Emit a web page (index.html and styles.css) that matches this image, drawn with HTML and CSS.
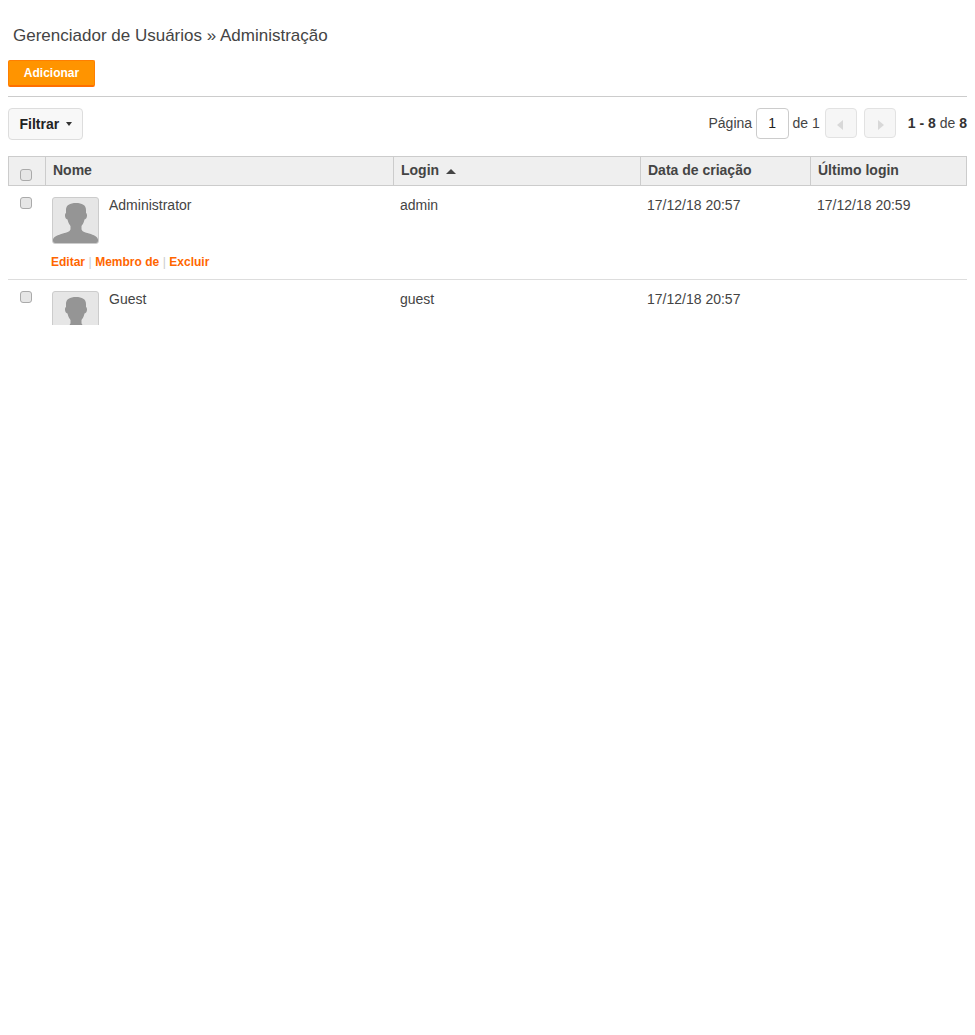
FILE: index.html
```html
<!DOCTYPE html>
<html lang="pt">
<head>
<meta charset="utf-8">
<title>Gerenciador de Usuários</title>
<link rel="stylesheet" href="styles.css">
</head>
<body>
<svg class="defs" width="0" height="0" aria-hidden="true">
  <symbol id="person" viewBox="0 0 47 47">
    <path d="M1 47V42.500C1.500 39.500 6 38 11 36.500C15 35.300 18.500 34.500 18.500 32V29C17 27 16 25 15.500 22.500C14 22.300 13 20.500 13 18.500C13 17 13.500 16.200 14 16V13C14 8 18 6 24 6C30 6 34 8 34 13V16C34.500 16.200 35 17 35 18.500C35 20.500 34 22.300 32.500 22.500C32 25 31 27 29.500 29V32C29.500 34.500 33 35.300 37 36.500C42 38 45.500 39.500 46 42.500V47Z"/>
  </symbol>
</svg>
<h1 class="title">Gerenciador de Usuários » Administração</h1>
<div class="actions"><button class="btn-add" type="button">Adicionar</button></div>
<div class="toolbar">
  <button class="btn-filter" type="button">Filtrar<span class="caret"></span></button>
  <div class="pager">
    <span class="pager-text">Página</span>
    <input class="page-input" type="text" value="1" aria-label="Página">
    <span class="pager-text">de 1</span>
    <button class="page-btn prev" type="button" aria-label="Anterior"><span class="tri tri-left"></span></button>
    <button class="page-btn next" type="button" aria-label="Próxima"><span class="tri tri-right"></span></button>
    <span class="pager-text range"><b>1 - 8</b> de <b>8</b></span>
  </div>
</div>
<div class="table-clip">
  <table class="users">
    <colgroup>
      <col class="c-check"><col class="c-name"><col class="c-login"><col class="c-date"><col class="c-last">
    </colgroup>
    <thead>
      <tr>
        <th class="th-check"><span class="check"></span></th>
        <th>Nome</th>
        <th>Login<span class="sort"></span></th>
        <th>Data de criação</th>
        <th>Último login</th>
      </tr>
    </thead>
    <tbody>
      <tr>
        <td class="td-check"><span class="check"></span></td>
        <td class="td-name">
          <div class="user">
            <span class="avatar"><svg width="47" height="47"><use href="#person"/></svg></span>
            <span>Administrator</span>
          </div>
          <div class="links"><a href="#">Editar</a><i>|</i><a href="#">Membro de</a><i>|</i><a href="#">Excluir</a></div>
        </td>
        <td>admin</td>
        <td>17/12/18 20:57</td>
        <td>17/12/18 20:59</td>
      </tr>
      <tr>
        <td class="td-check"><span class="check"></span></td>
        <td class="td-name">
          <div class="user">
            <span class="avatar"><svg width="47" height="47"><use href="#person"/></svg></span>
            <span>Guest</span>
          </div>
        </td>
        <td>guest</td>
        <td>17/12/18 20:57</td>
        <td></td>
      </tr>
    </tbody>
  </table>
</div>
</body>
</html>
```

FILE: styles.css
```css
html, body { background: #fff; }
body {
  margin: 0;
  padding: 0 8px;
  font-family: "Liberation Sans", Arial, sans-serif;
  font-size: 14px;
  line-height: 20px;
  color: #444;
}
.defs { position: absolute; }
.title {
  margin: 0;
  padding: 26px 0 0 5px;
  font-size: 17px;
  line-height: 20px;
  font-weight: 400;
  color: #444;
}
.actions {
  margin-top: 14px;
  height: 36px;
  border-bottom: 1px solid #ccc;
}
.btn-add {
  display: block;
  box-sizing: border-box;
  width: 87px;
  height: 27px;
  padding: 0;
  background: #ff9400;
  border: 1px solid #ff7f00;
  border-bottom: 2px solid #ff6f00;
  border-radius: 2px;
  color: #fff;
  font: 700 12px/20px "Liberation Sans", Arial, sans-serif;
}
.toolbar {
  display: flex;
  justify-content: space-between;
  align-items: flex-start;
  padding-top: 11px;
  height: 48px;
}
.btn-filter {
  box-sizing: border-box;
  display: flex;
  align-items: center;
  width: 75px;
  height: 32px;
  padding: 0 0 0 10.500px;
  background: #f8f8f8;
  border: 1px solid #ddd;
  border-radius: 4px;
  color: #222;
  font: 700 14px/20px "Liberation Sans", Arial, sans-serif;
}
.caret {
  margin-left: 6.500px;
  border-left: 3px solid transparent;
  border-right: 3px solid transparent;
  border-top: 4px solid #333;
}
.pager {
  display: flex;
  align-items: center;
  height: 31px;
}
.pager-text { margin-bottom: 1px; }
.page-input {
  box-sizing: border-box;
  width: 33px;
  height: 31px;
  margin: 0 4px 0 3.500px;
  padding: 0 0 2px;
  text-align: center;
  background: #fff;
  border: 1px solid #ccc;
  border-radius: 4px;
  color: #222;
  font: 14px "Liberation Sans", Arial, sans-serif;
}
.page-btn {
  box-sizing: border-box;
  display: flex;
  align-items: center;
  justify-content: center;
  width: 32px;
  height: 30px;
  margin-bottom: 1px;
  padding: 3px 0 0;
  background: #f6f6f6;
  border: 1px solid #e2e2e2;
  border-radius: 4px;
}
.prev { margin-left: 5px; padding-right: 2px; }
.next { margin-left: 7px; padding-left: 2px; }
.tri { display: block; border-top: 5.500px solid transparent; border-bottom: 5.500px solid transparent; }
.tri-left { border-right: 6px solid #d8d8d8; }
.tri-right { border-left: 6px solid #d8d8d8; }
.range { margin-left: 12px; }
.range b { color: #333; }
.table-clip {
  height: 169px;
  overflow: hidden;
}
.users {
  width: 959px;
  border-collapse: collapse;
  table-layout: fixed;
}
.c-check { width: 37px; }
.c-login { width: 247px; }
.c-date { width: 170px; }
.c-last { width: 156px; }
.users th {
  box-sizing: border-box;
  height: 29px;
  padding: 3px 7px 5px;
  background: #efefef;
  border: 1px solid #ccc;
  text-align: left;
  vertical-align: top;
  font-size: 14px;
  line-height: 20px;
  font-weight: 700;
  color: #444;
}
.users .th-check { padding: 12px 0 0 11px; }
.check {
  display: block;
  box-sizing: border-box;
  width: 12px;
  height: 12px;
  background: #e6e6e6;
  border: 1px solid #aaa;
  border-radius: 3px;
}
.sort {
  display: inline-block;
  margin-left: 7px;
  vertical-align: 1px;
  border-left: 5px solid transparent;
  border-right: 5px solid transparent;
  border-bottom: 5px solid #444;
}
.users td {
  padding: 9px 6px 0 6.500px;
  border-bottom: 1px solid #ddd;
  vertical-align: top;
  line-height: 20px;
  color: #444;
}
.users .td-check { padding: 11px 0 0 11px; border-left: 1px solid transparent; }
.users .td-name { padding-left: 6px; height: 84px; box-sizing: content-box; }
.user {
  display: flex;
  gap: 10.500px;
  align-items: flex-start;
}
.avatar {
  display: block;
  box-sizing: border-box;
  width: 47px;
  height: 47px;
  margin-top: 2px;
  overflow: hidden;
  background: #e6e6e6;
  border: 1px solid #ccc;
  border-radius: 3px;
}
.avatar svg { display: block; margin: -1px; fill: #959595; }
.links {
  margin: 8px 0 0 -0.500px;
  font-size: 12px;
  line-height: 20px;
  font-weight: 700;
}
.links a { color: #ff6600; text-decoration: none; }
.links i { margin: 0 3.500px; font-style: normal; font-weight: 400; color: #ccc; }
```
